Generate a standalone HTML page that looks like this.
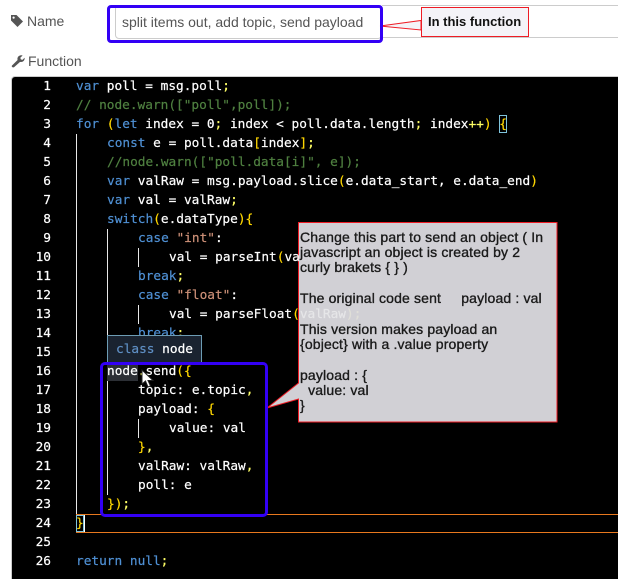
<!DOCTYPE html>
<html><head><meta charset="utf-8">
<style>
html,body{margin:0;padding:0;background:#fff;width:618px;height:579px;overflow:hidden}
.a{position:absolute}
#code{position:absolute;left:0;top:1px;font:12.79px/19px "DejaVu Sans Mono",monospace;color:#fff;font-weight:400;-webkit-text-stroke:.2px}
.l{position:absolute;white-space:pre;height:19px}
.n{position:absolute;left:20px;width:31px;text-align:right;white-space:pre;color:#fff;font:12.79px/19px "DejaVu Sans Mono",monospace}
.k{color:#4f90d4}.c{color:#4f8040}.s{color:#ce9178}.y{color:#ffd700}.p{color:#ffff66}
.g{position:absolute;width:1px;background:#e8e8e8}
.ui{font-family:"Liberation Sans",sans-serif;color:#555;font-size:14px}
#note{position:absolute;left:300px;top:229.5px;font:14px/15.35px "Liberation Sans",sans-serif;color:#1a1a1a;white-space:pre;-webkit-text-stroke:.35px #1a1a1a;letter-spacing:.15px}
</style></head><body>

<div class="a" style="left:382px;top:5px;width:236px;height:33px;border-top:1px solid #ccc;border-bottom:1px solid #ccc;box-sizing:border-box"></div>
<div class="a" style="left:115px;top:5px;width:267px;height:34px;border:1px solid #ccc;border-radius:4px;box-sizing:border-box"></div>
<svg class="a" style="left:10px;top:14px" width="14" height="14" viewBox="0 0 14 14"><path d="M1 1h5.5l6.5 6.5-5.5 5.5L1 6.5z" fill="#555"/><circle cx="3.6" cy="3.6" r="1.1" fill="#fff"/></svg>
<div class="a ui" style="left:27px;top:13px">Name</div>
<svg class="a" style="left:11px;top:54px" width="14" height="14" viewBox="0 0 14 14"><path d="M1 11.5L6.6 6C6 4 7 1.5 10 1.2c.8 0 1.2.1 1.6.3L9.3 3.8l.5 1.6 1.6.5 2.2-2.2c.4 2-1.2 4.8-4.5 4.2L3 13.2c-1 .8-3-.6-2-1.7z" fill="#555"/></svg>
<div class="a ui" style="left:28px;top:53px">Function</div>
<div class="a ui" style="left:122px;top:14px">split items out, add topic, send payload</div>

<!-- editor -->
<div class="a" style="left:11px;top:76px;width:607px;height:503px;background:#000;border:1px solid #ccc;border-right:0;border-bottom:0;box-sizing:border-box;border-top-left-radius:4px"></div>

<!-- guides -->
<div class="g" style="left:76px;top:134px;height:380px"></div>
<div class="g" style="left:107px;top:229px;height:133px"></div>
<div class="g" style="left:107px;top:381px;height:114px"></div>
<div class="g" style="left:138px;top:248px;height:19px"></div>
<div class="g" style="left:138px;top:305px;height:19px"></div>
<div class="g" style="left:138px;top:419px;height:19px"></div>

<!-- current line + bracket boxes -->
<div class="a" style="left:76px;top:514px;width:542px;height:19px;border-top:1px solid #e8781e;border-bottom:1px solid #e8781e;box-sizing:border-box"></div>
<div class="a" style="left:76px;top:515px;width:8px;height:17px;border:1px solid #7fc4dc;box-sizing:border-box"></div>
<div class="a" style="left:84px;top:515px;width:1px;height:17px;background:#fff"></div>
<div class="a" style="left:499px;top:115px;width:8px;height:18px;border:1px solid #7fc4dc;box-sizing:border-box"></div>
<div class="a" style="left:107px;top:364px;width:31px;height:17px;background:#2c2f35"></div>

<!-- callout bg -->
<svg class="a" style="left:0;top:0" width="618" height="579">
<path d="M298.5 222.5H557V422H298.5V399L267 408L298.5 383Z" fill="#d1d0d5" stroke="#ee1c25" stroke-width="1"/>
<path d="M380 26L421 20.5V30L380 26" fill="#f4f3f8" stroke="#ee1c25" stroke-width="1"/>
</svg>

<div id="code">
<div class="n" style="top:76px">1</div><div class="n" style="top:95px">2</div><div class="n" style="top:114px">3</div><div class="n" style="top:133px">4</div><div class="n" style="top:152px">5</div><div class="n" style="top:171px">6</div><div class="n" style="top:190px">7</div><div class="n" style="top:209px">8</div><div class="n" style="top:228px">9</div><div class="n" style="top:247px">10</div><div class="n" style="top:266px">11</div><div class="n" style="top:285px">12</div><div class="n" style="top:304px">13</div><div class="n" style="top:323px">14</div><div class="n" style="top:342px">15</div><div class="n" style="top:361px">16</div><div class="n" style="top:380px">17</div><div class="n" style="top:399px">18</div><div class="n" style="top:418px">19</div><div class="n" style="top:437px">20</div><div class="n" style="top:456px">21</div><div class="n" style="top:475px">22</div><div class="n" style="top:494px">23</div><div class="n" style="top:513px">24</div><div class="n" style="top:532px">25</div><div class="n" style="top:551px">26</div>

<div class="l" style="left:76px;top:76px"><span class="k">var</span> poll = msg.poll<span class="p">;</span></div>
<div class="l c" style="left:76px;top:95px">// node.warn(["poll",poll]);</div>
<div class="l" style="left:76px;top:114px"><span class="k">for</span> <span class="y">(</span><span class="k">let</span> index = 0<span class="p">;</span> index &lt; poll.data.length<span class="p">;</span> index<span class="p">++</span><span class="y">)</span> <span class="y">{</span></div>
<div class="l" style="left:107px;top:133px"><span class="k">const</span> e = poll.data<span class="y">[</span>index<span class="y">]</span><span class="p">;</span></div>
<div class="l c" style="left:107px;top:152px">//node.warn(["poll.data[i]", e]);</div>
<div class="l" style="left:107px;top:171px"><span class="k">var</span> valRaw = msg.payload.slice<span class="y">(</span>e.data_start, e.data_end<span class="y">)</span></div>
<div class="l" style="left:107px;top:190px"><span class="k">var</span> val = valRaw<span class="p">;</span></div>
<div class="l" style="left:107px;top:209px"><span class="k">switch</span><span class="y">(</span>e.dataType<span class="y">)</span><span class="y">{</span></div>
<div class="l" style="left:138px;top:228px"><span class="k">case</span> <span class="s">"int"</span>:</div>
<div class="l" style="left:169px;top:247px">val = parseInt<span class="y">(</span>va<span style="color:#d6d5da">lRaw);</span></div>
<div class="l k" style="left:138px;top:266px">break<span class="p">;</span></div>
<div class="l" style="left:138px;top:285px"><span class="k">case</span> <span class="s">"float"</span>:</div>
<div class="l" style="left:169px;top:304px">val = parseFloat<span class="y">(</span><span style="color:#e6e6e8">valRaw</span><span style="color:#e0dfd8">);</span></div>
<div class="l k" style="left:138px;top:323px">break<span class="p">;</span></div>
<div class="l" style="left:107px;top:361px">node<span class="p">.</span>send<span class="y">({</span></div>
<div class="l" style="left:138px;top:380px">topic: e.topic<span class="p">,</span></div>
<div class="l" style="left:138px;top:399px">payload: <span class="y">{</span></div>
<div class="l" style="left:169px;top:418px">value: val</div>
<div class="l" style="left:138px;top:437px"><span class="y">}</span><span class="p">,</span></div>
<div class="l" style="left:138px;top:456px">valRaw: valRaw<span class="p">,</span></div>
<div class="l" style="left:138px;top:475px">poll: e</div>
<div class="l" style="left:107px;top:494px"><span class="y">})</span><span class="p">;</span></div>
<div class="l y" style="left:76px;top:513px">}</div>
<div class="l" style="left:76px;top:551px"><span class="k">return</span> <span class="k">null</span><span class="p">;</span></div>
</div>

<!-- tooltip -->
<div class="a" style="left:107px;top:335px;width:95px;height:28px;background:#1a2330;border:1px solid #6d9cb4;border-bottom:0;box-sizing:border-box;font:12.79px/28px 'DejaVu Sans Mono',monospace;color:#fff;padding-left:8px;white-space:pre;-webkit-text-stroke:.2px"><span style="color:#5f8fc4">class</span> node</div>

<!-- note text -->
<div id="note">Change this part to send an object ( In
javascript an object is created by 2
curly brakets { } )

The original code sent     payload : val

This version makes payload an
{object} with a .value property

payload : {
  value: val
}</div>

<!-- blue highlights -->
<div class="a" style="left:107px;top:5px;width:276px;height:38px;border:3px solid #3300f5;border-radius:4px;box-sizing:border-box"></div>
<div class="a" style="left:100px;top:362px;width:168px;height:155px;border:3px solid #3300f5;border-radius:5px;box-sizing:border-box"></div>

<!-- small callout -->
<div class="a" style="left:421px;top:7px;width:108px;height:30px;background:#f4f3f8;border:1px solid #ee1c25;box-sizing:border-box;font:bold 13px/28px 'Liberation Sans',sans-serif;color:#111;padding-left:6px;white-space:pre">In this function</div>

<!-- mouse cursor -->
<svg class="a" style="left:141px;top:369px" width="14" height="20" viewBox="0 0 14 20"><path d="M1 1V15L4.5 12L7 18L9.5 17L7 11.5H12Z" fill="#fff" stroke="#222" stroke-width="1"/></svg>
</body></html>
